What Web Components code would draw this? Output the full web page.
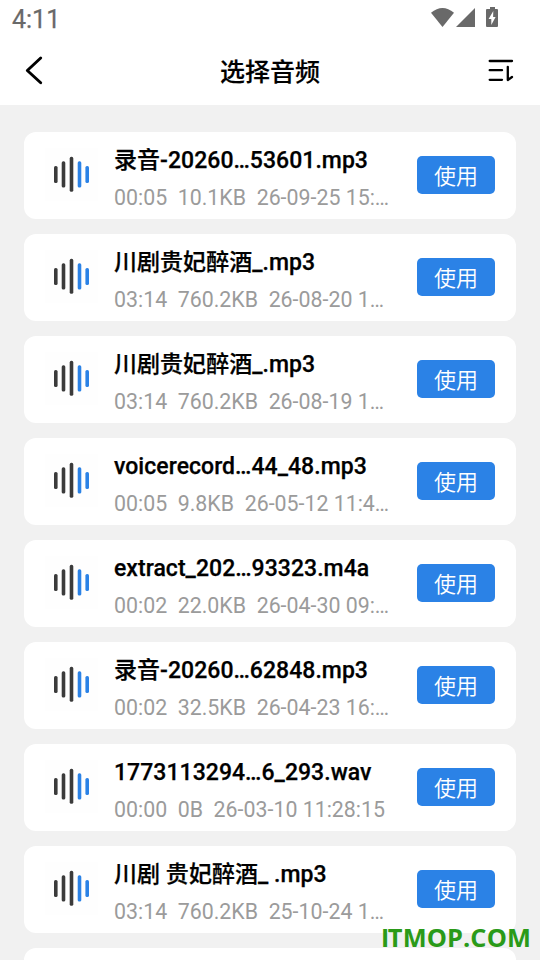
<!DOCTYPE html>
<html lang="zh-CN">
<head>
<meta charset="utf-8">
<title>选择音频</title>
<style>
html,body{margin:0;height:960px;overflow:hidden;background:#f1f1f1}
body{font-family:Roboto,"Noto Sans CJK SC",sans-serif}
</style>
</head>
<body>
<audio-picker></audio-picker>
<script>
const define=(name,html)=>customElements.define(name,class extends HTMLElement{
  connectedCallback(){
    if(this.shadowRoot)return;
    const t=document.createElement('template');
    t.innerHTML=html;
    this.attachShadow({mode:'open'}).append(t.content.cloneNode(true));
  }
});

define('status-bar',`<style>
:host{display:flex;height:36px;justify-content:space-between;box-sizing:border-box;padding:0 40px 0 12px;color:#696969;font-size:25px;line-height:39px;font-weight:400}
span{-webkit-text-stroke:.25px #696969}
svg{display:block;width:72px;height:36px}
</style><span>4:11</span>
<svg viewBox="428 0 72 36" fill="#696969"><path d="M431 12.8Q442.500 3.200 454 12.800L442.500 27Z"/><path d="M475 8V27H456Z"/><path fill-rule="evenodd" d="M490 7h5v2h2q1 0 1 1v16q0 1-1 1h-10q-1 0-1-1V10q0-1 1-1h3ZM493.300 11L488.600 19H491.300V25L495.600 17H493.100Z"/></svg>`);

define('title-bar',`<style>
:host{display:flex;height:69px;align-items:center;justify-content:space-between;box-sizing:border-box;padding:0 24px 2px 24px}
h1{margin:0;font:500 25px/36px Roboto,"Noto Sans CJK SC",sans-serif;color:#000;height:33px;padding-top:3px;-webkit-text-stroke:.2px #000}
svg{display:block;width:30px;height:36px;fill:none;stroke:#000;stroke-width:2.900;stroke-linecap:round;stroke-linejoin:round}
</style>
<svg viewBox="24 52 30 36"><path d="M40.700 58L27.300 70.500L40.700 82.800"/></svg>
<h1><slot></slot></h1>
<svg viewBox="486 52 30 36"><path stroke-width="2.300" d="M489.700 61H512M489.700 70.200H502M489.700 79.800H502M507.800 66.800V80L512 77"/></svg>`);

define('wave-icon',`<style>:host{display:block;width:53px;height:53px;background:#fefefe}svg{display:block}</style>
<svg width="53" height="53" viewBox="0 0 53 53" fill="#3b3b3b"><rect x="9" y="18" width="3.600" height="17" rx="1.600"/><rect x="16.700" y="13.300" width="3.600" height="26.300" rx="1.600"/><rect x="24.700" y="8.800" width="3.600" height="35" rx="1.600"/><g fill="#2b82e6"><rect x="32.700" y="13.300" width="3.600" height="26.300" rx="1.600"/><rect x="40.400" y="18" width="3.600" height="17" rx="1.600"/></g></svg>`);

define('use-button',`<style>
:host{display:block;width:78px;height:38px}
button{display:block;width:100%;height:100%;border:0;border-radius:5px;padding:3px 0 0;background:#2b82e6;color:#fff;font:350 22px/35px Roboto,"Noto Sans CJK SC",sans-serif}
</style><button><slot></slot></button>`);

define('audio-card',`<style>
:host{display:flex;height:87px;box-sizing:border-box;padding:0 21px 1px;align-items:center;background:#fff;border-radius:12px}
wave-icon{margin:-1px 16px 0 0}
.info{flex:1;min-width:0;height:86px;box-sizing:border-box;padding-top:12px}
.name{font-size:23px;font-weight:500;-webkit-text-stroke:.25px #000;letter-spacing:.04px;line-height:33px;height:33px;color:#000;white-space:pre}
.meta{font-size:21.350px;line-height:30px;height:30px;margin-top:6px;color:#9b9b9b;white-space:pre}
</style>
<wave-icon></wave-icon>
<div class="info"><div class="name"><slot name="name"></slot></div><div class="meta"><slot name="meta"></slot></div></div>
<use-button>使用</use-button>`);

const files=[
 ['录音-20260…53601.mp3','00:05  10.1KB  26-09-25 15:…'],
 ['川剧贵妃醉酒_.mp3','03:14  760.2KB  26-08-20 1…'],
 ['川剧贵妃醉酒_.mp3','03:14  760.2KB  26-08-19 1…'],
 ['voicerecord…44_48.mp3','00:05  9.8KB  26-05-12 11:4…'],
 ['extract_202…93323.m4a','00:02  22.0KB  26-04-30 09:…'],
 ['录音-20260…62848.mp3','00:02  32.5KB  26-04-23 16:…'],
 ['1773113294…6_293.wav','00:00  0B  26-03-10 11:28:15'],
 ['川剧 贵妃醉酒_ .mp3','03:14  760.2KB  25-10-24 1…']
];

define('audio-picker',`<style>
:host{display:block;position:relative;width:540px;height:960px;overflow:hidden;background:#f1f1f1}
header{background:#fff;height:105px}
main{display:flex;flex-direction:column;gap:15px;padding:27px 24px 0}
.next{height:87px;border-radius:12px;background:#fff}
.mark{position:absolute;right:9px;bottom:7px;color:#2a9a18;font:700 25.400px/32px "Open Sans",sans-serif;letter-spacing:.1px;white-space:nowrap}
.mark span{font-family:Lato;font-weight:900;letter-spacing:-1px}
</style>
<header><status-bar></status-bar><title-bar>选择音频</title-bar></header>
<main>${files.map(([n,m])=>`<audio-card><span slot="name">${n}</span><span slot="meta">${m}</span></audio-card>`).join('')}<div class="next"></div></main>
<div class="mark"><span>I</span>TMOP.COM</div>`);
</script>
</body>
</html>
